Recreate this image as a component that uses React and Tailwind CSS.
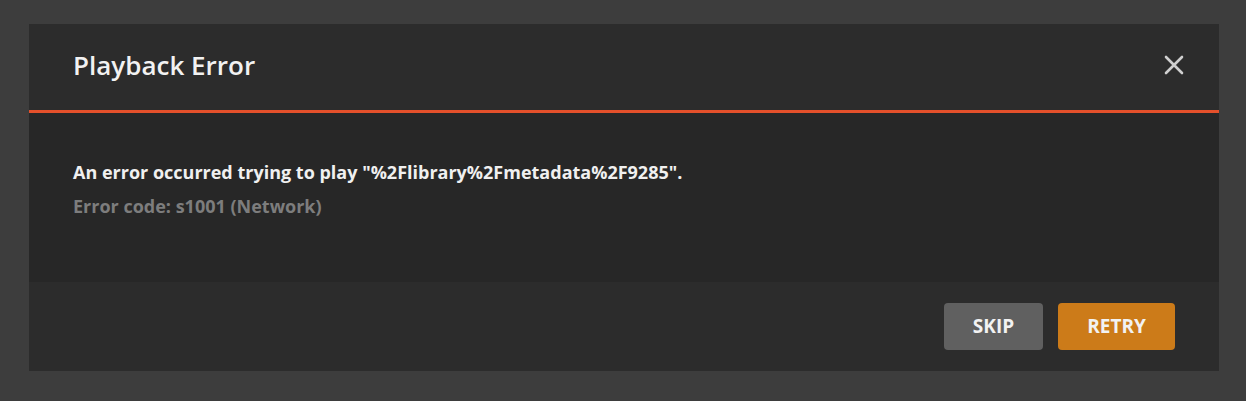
import React from "react";

export default function App() {
  return (
    <div className="w-[1246px] h-[401px] bg-[#3d3d3d] pt-[24px] pl-[29px]" style={{ fontFamily: '"Open Sans", "Noto Sans", sans-serif' }}>
      <div className="w-[1190px] flex flex-col">
        <div className="h-[86px] bg-[#2c2c2c] flex items-center justify-between pl-[44px] pr-[34px]">
          <h1 className="text-[26px] font-semibold text-[#f2f2f2] leading-none mt-[-4px]">Playback Error</h1>
          <svg width="22" height="22" viewBox="0 0 22 22" className="mt-[-4px]">
            <path d="M3 3 L19 19 M19 3 L3 19" stroke="#cfcfcf" strokeWidth="2.6" strokeLinecap="round" />
          </svg>
        </div>
        <div className="h-[3px] bg-[#e4502b]" />
        <div className="h-[169px] bg-[#272727] pl-[44px] pt-[47px]">
          <p className="text-[18px] font-bold text-[#f0f0f0] leading-[24px]">An error occurred trying to play "%2Flibrary%2Fmetadata%2F9285".</p>
          <p className="text-[18px] font-bold text-[#7d7d7d] leading-[24px] mt-[10px]">Error code: s1001 (Network)</p>
        </div>
        <div className="h-[89px] bg-[#2c2c2c] flex items-center justify-end gap-[15px] pr-[44px]">
          <button className="w-[99px] h-[47px] rounded-[4px] bg-[#606060] text-[#f2f2f2] text-[19px] font-bold">SKIP</button>
          <button className="w-[117px] h-[47px] rounded-[4px] bg-[#cc7b19] text-[#f2f2f2] text-[19px] font-bold">RETRY</button>
        </div>
      </div>
    </div>
  );
}
